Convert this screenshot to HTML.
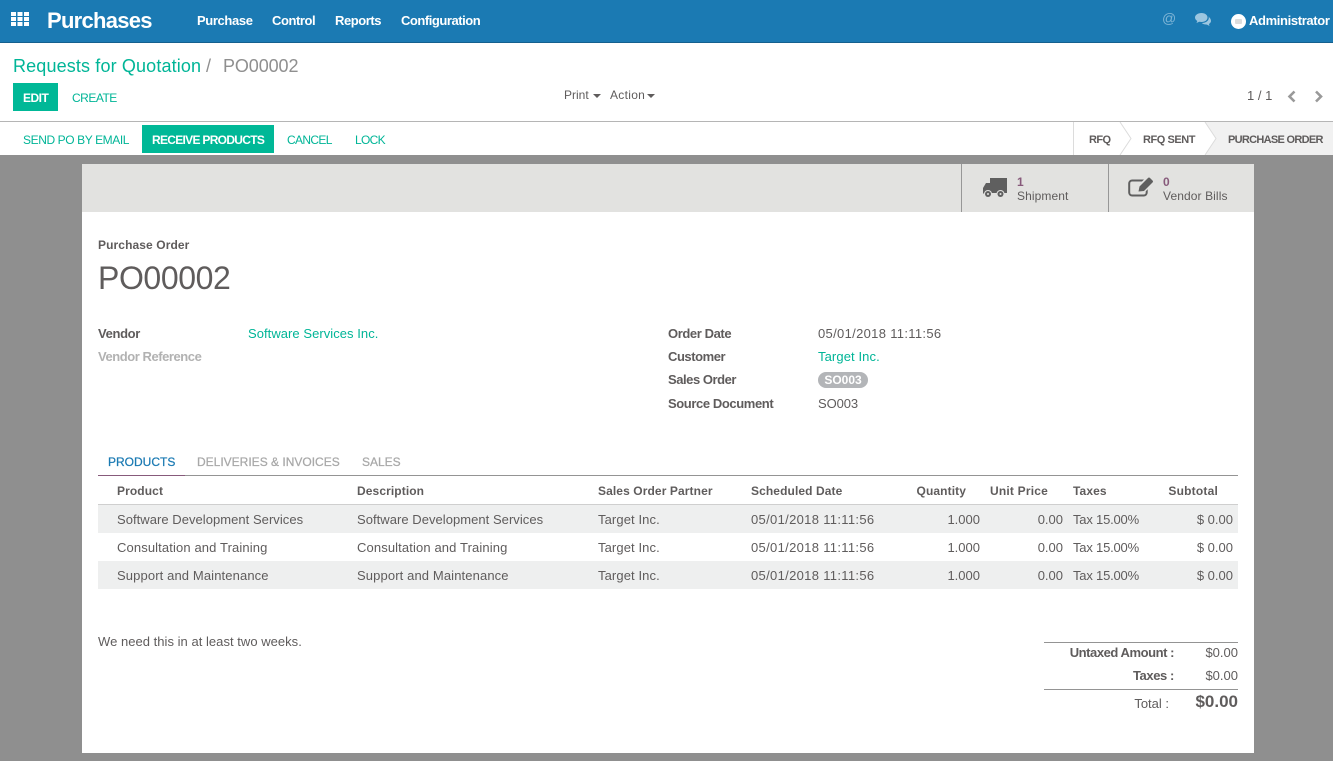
<!DOCTYPE html>
<html><head><meta charset="utf-8">
<style>
html,body{margin:0;padding:0}
body{width:1333px;height:761px;overflow:hidden;position:relative;background:#8f8f8f;font-family:"Liberation Sans",Arial,sans-serif;font-size:13px;color:#5f5c5c}
.a{position:absolute;white-space:nowrap;line-height:16px}
.r{text-align:right}
.b{font-weight:bold}
.g{color:#00b597}
.w{color:#fff}
.box{position:absolute}
.nb{letter-spacing:-.4px}
.d{letter-spacing:.32px}
.t{letter-spacing:.12px}
.h{letter-spacing:.1px}
</style></head><body>
<div class="box" style="left:0;top:0;width:1333px;height:42px;background:#1b7ab3;border-bottom:1px solid #14608e"></div>
<svg class="box" style="left:11px;top:12px" width="18" height="14" fill="#fff"><rect x="0" y="0" width="5" height="4"/><rect x="6.500" y="0" width="5" height="4"/><rect x="13" y="0" width="5" height="4"/><rect x="0" y="5" width="5" height="4"/><rect x="6.500" y="5" width="5" height="4"/><rect x="13" y="5" width="5" height="4"/><rect x="0" y="10" width="5" height="4"/><rect x="6.500" y="10" width="5" height="4"/><rect x="13" y="10" width="5" height="4"/></svg>
<div class="a b w" style="left:47px;top:8px;font-size:22px;line-height:26px;letter-spacing:-.73px">Purchases</div>
<div class="a b w" style="left:197px;top:13px;letter-spacing:-.37px">Purchase</div>
<div class="a b w" style="left:272px;top:13px;letter-spacing:-.43px">Control</div>
<div class="a b w" style="left:335px;top:13px;letter-spacing:-.43px">Reports</div>
<div class="a b w" style="left:401px;top:13px;letter-spacing:-.46px">Configuration</div>
<div class="a" style="left:1162px;top:10px;font-size:14px;color:#7fb5d6">@</div>
<svg class="box" style="left:1195px;top:13px" width="17" height="14" fill="#9cc6e0"><path d="M6.500 0C2.900 0 0 2 0 4.500c0 1.400.9 2.700 2.300 3.500L1.500 10l2.700-1.200c.7.100 1.500.2 2.300.2 3.600 0 6-2 6-4.500S10.100 0 6.500 0z"/><path d="M13.500 3.500c.2.400.3.800.3 1.200 0 3-3 5.200-7 5.300 1 1 2.500 1.500 4.200 1.500l1 .1 2.500 1.400-.6-2c1.300-.7 2.100-1.800 2.100-3 0-1.800-1-3.400-3-4.500z"/></svg>
<svg class="box" style="left:1231px;top:14px" width="15" height="15"><circle cx="7.500" cy="7.500" r="7.500" fill="#fff"/><rect x="4" y="5" width="7" height="5" rx="1" fill="#ddd"/></svg>
<div class="a b w" style="left:1249px;top:13px;letter-spacing:-.36px">Administrator</div>

<div class="box" style="left:0;top:43px;width:1333px;height:78px;background:#fff;border-bottom:1px solid #b5b5b5"></div>
<div class="a g" style="left:13px;top:55px;font-size:18px;line-height:22px;letter-spacing:.14px">Requests for Quotation</div>
<div class="a" style="left:206px;top:55px;font-size:18px;line-height:22px;color:#8f8f8f">/</div>
<div class="a" style="left:223px;top:55px;font-size:18px;line-height:22px;color:#8f8f8f;letter-spacing:-.1px">PO00002</div>
<div class="box" style="left:13px;top:83px;width:45px;height:28px;background:#00b897"></div>
<div class="a b w" style="left:23px;top:90px;font-size:12px;letter-spacing:-.5px">EDIT</div>
<div class="a g" style="left:72px;top:90px;font-size:12px;letter-spacing:-.5px">CREATE</div>
<div class="a" style="left:564px;top:87px;font-size:12px">Print</div>
<div class="box" style="left:593px;top:94px;border:4px solid transparent;border-top-color:#5f5c5c;border-bottom:0"></div>
<div class="a" style="left:610px;top:87px;font-size:12px;letter-spacing:.3px">Action</div>
<div class="box" style="left:647px;top:94px;border:4px solid transparent;border-top-color:#5f5c5c;border-bottom:0"></div>
<div class="a" style="left:1247px;top:88px">1 / 1</div>
<svg class="box" style="left:1287px;top:90px" width="40" height="13" fill="none" stroke="#999" stroke-width="2.600"><path d="M7.500 1.500L2.500 6.500L7.500 11.500"/><path d="M29 1.500L34 6.500L29 11.500"/></svg>

<div class="box" style="left:0;top:122px;width:1333px;height:33px;background:#fff"></div>
<div class="a g" style="left:23px;top:132px;font-size:12px;letter-spacing:-.4px">SEND PO BY EMAIL</div>
<div class="box" style="left:142px;top:125px;width:132px;height:28px;background:#00b897"></div>
<div class="a b w" style="left:152px;top:132px;font-size:12px;letter-spacing:-.7px">RECEIVE PRODUCTS</div>
<div class="a g" style="left:287px;top:132px;font-size:12px;letter-spacing:-.65px">CANCEL</div>
<div class="a g" style="left:355px;top:132px;font-size:12px;letter-spacing:-.7px">LOCK</div>
<svg class="box" style="left:1073px;top:122px" width="260" height="33"><path d="M132 0L143 16.500L132 33H260V0Z" fill="#f1f1f1"/><path d="M0.500 0V33M47 0L58 16.500L47 33M132 0L143 16.500L132 33" fill="none" stroke="#dcdcdc"/></svg>
<div class="a b" style="left:1089px;top:132px;font-size:11px;letter-spacing:-.6px">RFQ</div>
<div class="a b" style="left:1143px;top:132px;font-size:11px;letter-spacing:-.45px">RFQ SENT</div>
<div class="a b" style="left:1228px;top:132px;font-size:11px;letter-spacing:-.7px">PURCHASE ORDER</div>

<div class="box" style="left:82px;top:164px;width:1172px;height:589px;background:#fff"></div>
<div class="box" style="left:82px;top:164px;width:1172px;height:48px;background:#e2e2e0"></div>
<div class="box" style="left:961px;top:164px;width:1px;height:48px;background:#979797"></div>
<div class="box" style="left:1108px;top:164px;width:1px;height:48px;background:#979797"></div>
<svg class="box" style="left:983px;top:178px" width="24" height="20" fill="#5f5f5f"><rect x="7" y="0" width="17" height="15"/><path d="M0 10L3 5H8V15.500H0Z"/><circle cx="5" cy="16" r="4" fill="#e2e2e0"/><circle cx="5" cy="16" r="3"/><circle cx="5" cy="16" r="1" fill="#e2e2e0"/><circle cx="17.500" cy="16" r="4" fill="#e2e2e0"/><circle cx="17.500" cy="16" r="3"/><circle cx="17.500" cy="16" r="1" fill="#e2e2e0"/></svg>
<svg class="box" style="left:1128px;top:176px" width="26" height="22"><rect x="1.200" y="4.500" width="17.500" height="15" rx="3" fill="none" stroke="#5f5f5f" stroke-width="2"/><path d="M9 17L10 9.500L19 .5H22L26 4.500V7L17 16Z" fill="#e2e2e0"/><path d="M10.500 15.500L11.500 10.500L20 2Q21 1 22 2L24.500 4.500Q25.500 5.500 24.500 6.500L16 15Z" fill="#5f5f5f"/></svg>
<div class="a b" style="left:1017px;top:174px;font-size:12px;color:#875a7b">1</div>
<div class="a" style="left:1017px;top:188px;font-size:12px;letter-spacing:.1px">Shipment</div>
<div class="a b" style="left:1163px;top:174px;font-size:12px;color:#875a7b">0</div>
<div class="a" style="left:1163px;top:188px;font-size:12px;letter-spacing:.1px">Vendor Bills</div>

<div class="a b" style="left:98px;top:237px;font-size:12px;letter-spacing:.1px">Purchase Order</div>
<div class="a" style="left:98px;top:259px;font-size:32px;line-height:38px;letter-spacing:-.4px">PO00002</div>
<div class="a b" style="left:98px;top:326px;letter-spacing:-.35px">Vendor</div>
<div class="a g" style="left:248px;top:326px;letter-spacing:.05px">Software Services Inc.</div>
<div class="a b" style="left:98px;top:349px;color:#b2b2b2;letter-spacing:-.45px">Vendor Reference</div>
<div class="a b nb" style="left:668px;top:326px">Order Date</div>
<div class="a d" style="left:818px;top:326px">05/01/2018 11:11:56</div>
<div class="a b" style="left:668px;top:349px;letter-spacing:-.45px">Customer</div>
<div class="a g" style="left:818px;top:349px;letter-spacing:.1px">Target Inc.</div>
<div class="a b" style="left:668px;top:372px;letter-spacing:-.45px">Sales Order</div>
<div class="box" style="left:818px;top:372px;width:50px;height:16px;border-radius:8px;background:#b3b5b8"></div>
<div class="a b w" style="left:818px;width:50px;text-align:center;top:372px;font-size:12px">SO003</div>
<div class="a b nb" style="left:668px;top:396px">Source Document</div>
<div class="a" style="left:818px;top:396px;letter-spacing:-.1px">SO003</div>

<div class="a" style="left:108px;top:454px;font-size:12px;color:#1b7ab3;-webkit-text-stroke:.25px #1b7ab3">PRODUCTS</div>
<div class="a" style="left:197px;top:454px;font-size:12px;color:#a8a8a8;-webkit-text-stroke:.25px #a8a8a8">DELIVERIES &amp; INVOICES</div>
<div class="a" style="left:362px;top:454px;font-size:12px;color:#a8a8a8;-webkit-text-stroke:.25px #a8a8a8">SALES</div>
<div class="box" style="left:98px;top:475px;width:1140px;height:1px;background:#949494"></div>
<div class="box" style="left:98px;top:475px;width:87px;height:1px;background:#875a7b"></div>
<div class="a b h" style="left:117px;top:483px;font-size:12px">Product</div>
<div class="a b h" style="left:357px;top:483px;font-size:12px">Description</div>
<div class="a b h" style="left:598px;top:483px;font-size:12px">Sales Order Partner</div>
<div class="a b h" style="left:751px;top:483px;font-size:12px">Scheduled Date</div>
<div class="a b r h" style="left:866px;width:100px;top:483px;font-size:12px">Quantity</div>
<div class="a b r" style="left:948px;width:100px;top:483px;font-size:12px;letter-spacing:.2px">Unit Price</div>
<div class="a b h" style="left:1073px;top:483px;font-size:12px">Taxes</div>
<div class="a b r" style="left:1118px;width:100px;top:483px;font-size:12px;letter-spacing:.2px">Subtotal</div>
<div class="box" style="left:98px;top:504px;width:1140px;height:1px;background:#cfcfcf"></div>
<div class="box" style="left:98px;top:505px;width:1140px;height:28px;background:#eeefef"></div>
<div class="box" style="left:98px;top:561px;width:1140px;height:28px;background:#eeefef"></div>

<div class="a" style="left:117px;top:512px;letter-spacing:.04px">Software Development Services</div>
<div class="a" style="left:357px;top:512px;letter-spacing:.04px">Software Development Services</div>
<div class="a" style="left:598px;top:512px;letter-spacing:.1px">Target Inc.</div>
<div class="a d" style="left:751px;top:512px">05/01/2018 11:11:56</div>
<div class="a r" style="left:880px;width:100px;top:512px">1.000</div>
<div class="a r" style="left:963px;width:100px;top:512px">0.00</div>
<div class="a" style="left:1073px;top:512px;letter-spacing:-.2px">Tax 15.00%</div>
<div class="a r" style="left:1133px;width:100px;top:512px">$ 0.00</div>

<div class="a t" style="left:117px;top:540px">Consultation and Training</div>
<div class="a t" style="left:357px;top:540px">Consultation and Training</div>
<div class="a" style="left:598px;top:540px;letter-spacing:.1px">Target Inc.</div>
<div class="a d" style="left:751px;top:540px">05/01/2018 11:11:56</div>
<div class="a r" style="left:880px;width:100px;top:540px">1.000</div>
<div class="a r" style="left:963px;width:100px;top:540px">0.00</div>
<div class="a" style="left:1073px;top:540px;letter-spacing:-.2px">Tax 15.00%</div>
<div class="a r" style="left:1133px;width:100px;top:540px">$ 0.00</div>

<div class="a t" style="left:117px;top:568px">Support and Maintenance</div>
<div class="a t" style="left:357px;top:568px">Support and Maintenance</div>
<div class="a" style="left:598px;top:568px;letter-spacing:.1px">Target Inc.</div>
<div class="a d" style="left:751px;top:568px">05/01/2018 11:11:56</div>
<div class="a r" style="left:880px;width:100px;top:568px">1.000</div>
<div class="a r" style="left:963px;width:100px;top:568px">0.00</div>
<div class="a" style="left:1073px;top:568px;letter-spacing:-.2px">Tax 15.00%</div>
<div class="a r" style="left:1133px;width:100px;top:568px">$ 0.00</div>

<div class="a" style="left:98px;top:634px;letter-spacing:.03px">We need this in at least two weeks.</div>
<div class="box" style="left:1044px;top:642px;width:194px;height:1px;background:#949494"></div>
<div class="box" style="left:1044px;top:689px;width:194px;height:1px;background:#949494"></div>
<div class="a b r" style="left:1024px;width:150px;top:645px;letter-spacing:-.45px">Untaxed Amount :</div>
<div class="a r" style="left:1138px;width:100px;top:645px">$0.00</div>
<div class="a b r" style="left:1024px;width:150px;top:668px;letter-spacing:-.4px">Taxes :</div>
<div class="a r" style="left:1138px;width:100px;top:668px">$0.00</div>
<div class="a r" style="left:1019px;width:150px;top:696px">Total :</div>
<div class="a b r" style="left:1138px;width:100px;top:692px;font-size:17px;line-height:20px">$0.00</div>
</body></html>
